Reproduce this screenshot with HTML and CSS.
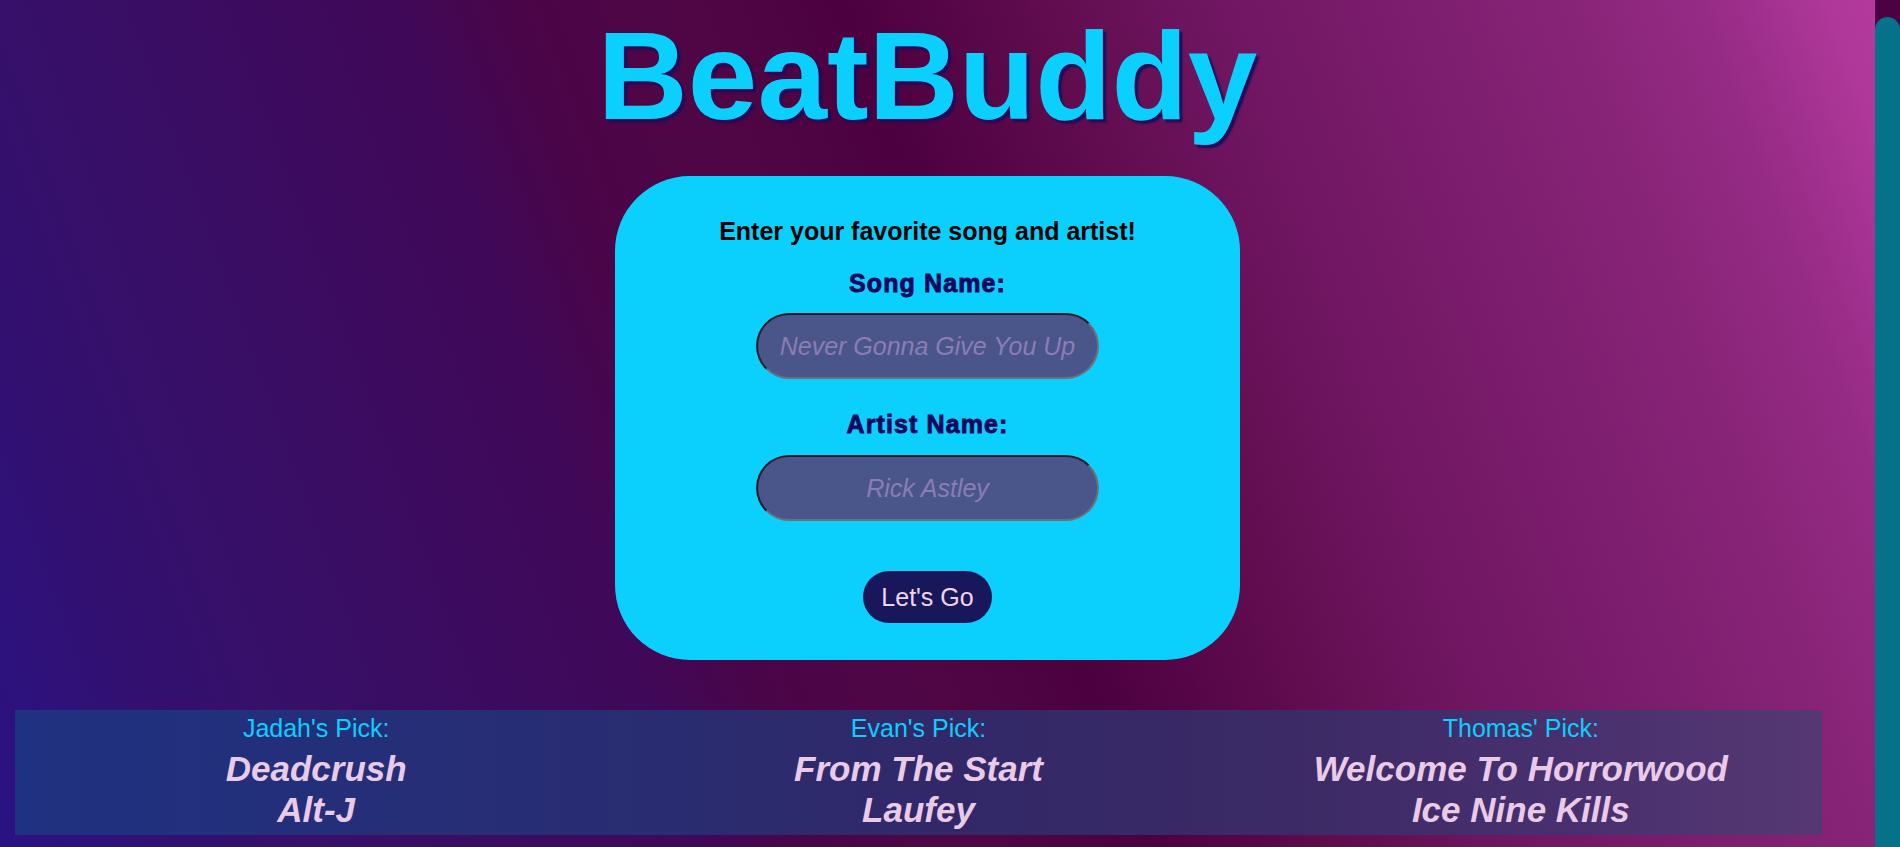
FILE: index.html
```html
<!DOCTYPE html>
<html lang="en">
<head>
<meta charset="utf-8">
<title>BeatBuddy</title>
<link rel="stylesheet" href="styles.css">
</head>
<body>
<main class="page">
  <h1 class="logo">BeatBuddy</h1>
  <form class="card">
    <p class="prompt">Enter your favorite song and artist!</p>
    <label class="field-label" for="song">Song Name:</label>
    <input class="field" id="song" type="text" placeholder="Never Gonna Give You Up">
    <label class="field-label artist-label" for="artist">Artist Name:</label>
    <input class="field" id="artist" type="text" placeholder="Rick Astley">
    <button class="go" type="button">Let's Go</button>
  </form>
</main>
<section class="picks">
  <div class="pick">
    <div class="pick-title">Jadah's Pick:</div>
    <div class="pick-song">Deadcrush<br>Alt-J</div>
  </div>
  <div class="pick">
    <div class="pick-title">Evan's Pick:</div>
    <div class="pick-song">From The Start<br>Laufey</div>
  </div>
  <div class="pick">
    <div class="pick-title">Thomas' Pick:</div>
    <div class="pick-song">Welcome To Horrorwood<br>Ice Nine Kills</div>
  </div>
</section>
<div class="scrollbar" aria-hidden="true"><div class="scrollbar-thumb"></div></div>
</body>
</html>
```
FILE: styles.css
```css
html {
  min-height: 100%;
  background: linear-gradient(70deg,
    #2a1284 0%,
    #321070 9%,
    #36106a 14%,
    #400858 32%,
    #4a0548 37%,
    #500645 45%,
    #4c0040 52%,
    #600c4e 61%,
    #6e1560 68%,
    #882478 85%,
    #962b85 91%,
    #b0389a 97%,
    #b63b9e 100%);
}

body {
  margin: 0;
  font-family: "Liberation Sans", Arial, sans-serif;
}

.page {
  width: 1855px;
  display: flex;
  flex-direction: column;
  align-items: center;
}

.logo {
  margin: 4px 0 0;
  font-size: 125px;
  line-height: 144px;
  font-weight: 700;
  color: #0bd0fe;
  text-shadow: 3px 3px 2px #1b0d5a;
}

.card {
  margin-top: 28px;
  width: 625px;
  box-sizing: border-box;
  padding: 41px 0 37px;
  background: #0bd0fe;
  border-radius: 75px;
  display: flex;
  flex-direction: column;
  align-items: center;
}

.prompt {
  margin: 0;
  font-size: 25px;
  line-height: 29px;
  font-weight: 700;
  color: #000;
}

.field-label {
  display: block;
  margin-top: 23px;
  font-size: 25px;
  line-height: 29px;
  font-weight: 700;
  color: #13085e;
  letter-spacing: 1.1px;
  -webkit-text-stroke: 0.9px #13085e;
}

.artist-label {
  margin-top: 31px;
}

.field {
  margin-top: 15px;
  width: 343px;
  height: 66px;
  box-sizing: border-box;
  padding: 0 10px;
  border: 2px solid;
  border-color: #1c1c2a #6f6f7c #6f6f7c #1c1c2a;
  border-radius: 33px;
  background: #4a5589;
  font-family: "Liberation Sans", Arial, sans-serif;
  font-size: 25px;
  font-style: italic;
  color: #d8d0f0;
  text-align: center;
  outline: none;
}

.artist-label + .field {
  margin-top: 16px;
}

.field::placeholder {
  color: #8a7db6;
  font-style: italic;
}

.go {
  margin-top: 50px;
  padding: 12px 18.5px;
  border: none;
  border-radius: 26px;
  background: #18175c;
  color: #f0d4ee;
  font-family: "Liberation Sans", Arial, sans-serif;
  font-size: 25px;
  line-height: 28px;
}

.picks {
  margin: 50px 0 13px 15px;
  width: 1807px;
  box-sizing: border-box;
  padding: 4px 0 5px;
  display: grid;
  grid-template-columns: 1fr 1fr 1fr;
  background: linear-gradient(90deg, #1f3181 0%, #2a2c70 38%, #322868 52%, #3b2a65 70%, #48306e 86%, #553873 100%);
  text-align: center;
}

.pick-title {
  font-size: 25px;
  line-height: 29px;
  color: #0bcfff;
  margin-bottom: 5px;
}

.pick-song {
  font-size: 35px;
  line-height: 41px;
  font-weight: 700;
  font-style: italic;
  color: #e9cbe8;
}

.scrollbar {
  position: fixed;
  top: 0;
  right: 0;
  width: 25px;
  height: 100vh;
  box-sizing: border-box;
  padding-top: 17px;
  background: #4b0142;
  display: flex;
}

.scrollbar-thumb {
  flex: 1;
  background: #05728a;
  border-radius: 12.5px 12.5px 0 0;
}
```
